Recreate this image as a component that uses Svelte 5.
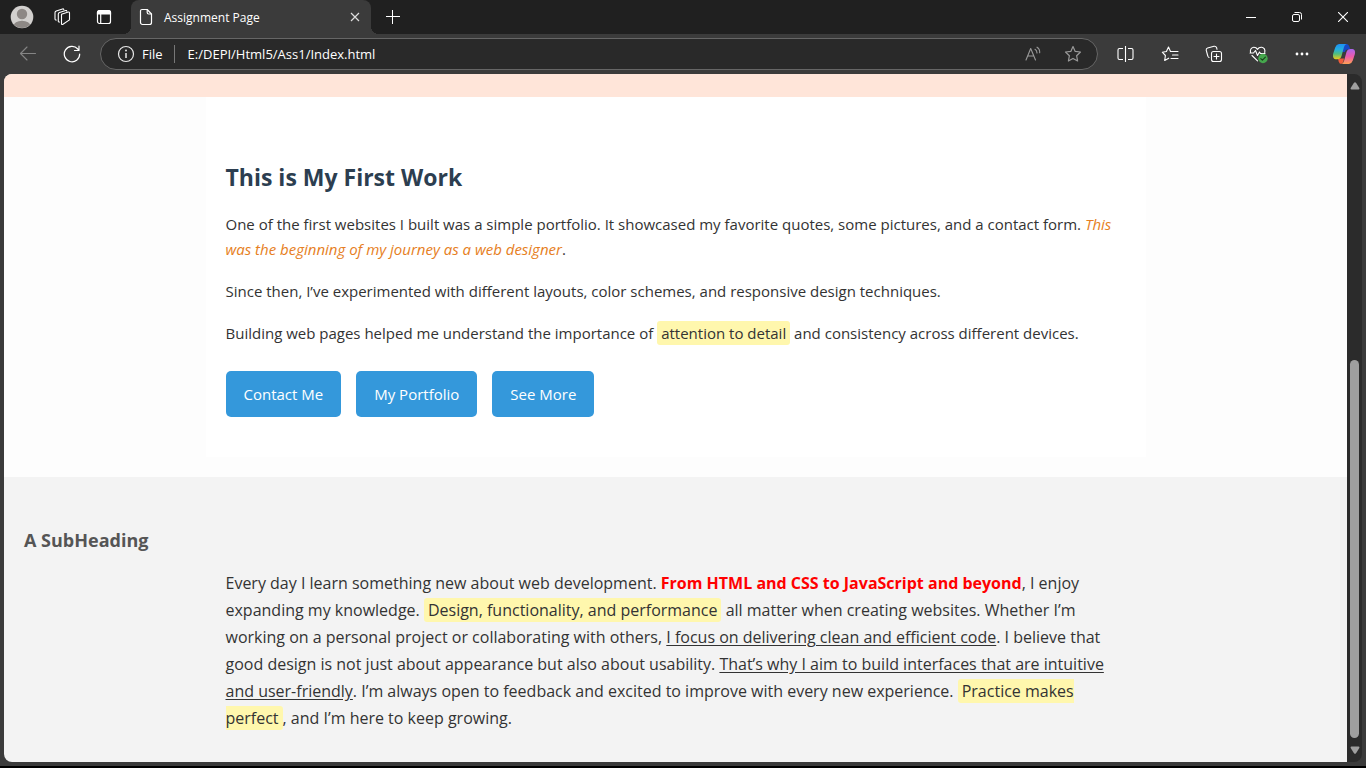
<script>
  const address = 'E:/DEPI/Html5/Ass1/Index.html';
  const links = ['Contact Me', 'My Portfolio', 'See More'];
</script>

<svelte:head><title>Assignment Page</title></svelte:head>

<div class="window">
  <header class="titlebar">
    <button class="profile" aria-label="Profile">
      <svg width="24" height="24" viewBox="0 0 24 24">
        <defs><clipPath id="avatar"><circle cx="12" cy="12" r="11" /></clipPath></defs>
        <circle cx="12" cy="12" r="11.3" fill="#d2d0ce" />
        <g clip-path="url(#avatar)" fill="#8d8885"><circle cx="12" cy="9" r="5.2" /><ellipse cx="12" cy="21" rx="8.5" ry="5.2" /></g>
      </svg>
    </button>
    <button class="spaces" aria-label="Workspaces">
      <svg width="18" height="18" viewBox="0 0 18 18" fill="none" stroke="#fff" stroke-width="1.1" stroke-linejoin="round" stroke-linecap="round">
        <path d="M8.5 6.2 15.3 4Q16.5 3.8 16.5 5V11.2Q16.5 12 15.7 12.4L10 16.3Q8.5 17 8.500 15.500Z" />
        <path d="M13.800 3.200Q13.700 2.200 12.600 2.500L6.500 4.500Q5.300 4.900 5.300 6V13.200Q5.400 14.200 6.500 14" />
        <path d="M10.800 1.600Q10.500.700 9.500 1L3.300 3Q2 3.500 2 4.700V11Q2.200 12.200 3.300 12" />
      </svg>
    </button>
    <button class="tabs" aria-label="Tab actions">
      <svg width="16" height="16" viewBox="0 0 16 16" fill="none" stroke="#fff" stroke-width="1.200">
        <rect x="1.500" y="1.500" width="13" height="13" rx="2" /><path d="M4.700 5v9" /><path d="M1.500 5V3.500a2 2 0 0 1 2-2h9a2 2 0 0 1 2 2V5z" fill="#fff" />
      </svg>
    </button>
    <div class="tab">
      <svg width="14" height="18" viewBox="0 0 14 18" fill="none" stroke="#fff" stroke-width="1.200" stroke-linejoin="round">
        <path d="M3 1.500H8.200L12.500 6V14.500a2 2 0 0 1-2 2H3.500a2 2 0 0 1-2-2V3a1.500 1.500 0 0 1 1.500-1.500Z" /><path d="M8.200 1.500V4.500A1.500 1.500 0 0 0 9.700 6h2.800" />
      </svg>
      <span>Assignment Page</span>
      <button class="close-tab" aria-label="Close tab">
        <svg width="10" height="10" viewBox="0 0 10 10" stroke="#ddd" stroke-width="1.200"><path d="M1 1l8 8M9 1 1 9" /></svg>
      </button>
    </div>
    <button class="new-tab" aria-label="New tab">
      <svg width="14" height="14" viewBox="0 0 14 14" stroke="#fff" stroke-width="1"><path d="M6.500 0v14M0 6.500h14" /></svg>
    </button>
    <div class="controls">
      <button aria-label="Minimize"><svg width="10" height="10" viewBox="0 0 10 10" stroke="#fff"><path d="M0 5.500h10" /></svg></button>
      <button aria-label="Restore"><svg width="10" height="10" viewBox="0 0 10 10" fill="none" stroke="#fff"><rect x=".5" y="2.500" width="7" height="7" rx="1.500" /><path d="M2.500.500H7.500a2 2 0 0 1 2 2V7.500" /></svg></button>
      <button aria-label="Close"><svg width="10" height="10" viewBox="0 0 10 10" stroke="#fff" stroke-width="1.100"><path d="M0 0l10 10M10 0 0 10" /></svg></button>
    </div>
  </header>

  <nav class="toolbar">
    <button aria-label="Back" disabled>
      <svg width="18" height="16" viewBox="0 0 18 16" fill="none" stroke="#858585" stroke-width="1.100" stroke-linecap="round" stroke-linejoin="round"><path d="M16.500 7.500H1.500M8 1 1.500 7.500 8 14" /></svg>
    </button>
    <button aria-label="Refresh">
      <svg width="18" height="18" viewBox="0 0 18 18" fill="none" stroke="#fff" stroke-width="1.200" stroke-linecap="round" stroke-linejoin="round"><path d="M16.700 9A7.700 7.700 0 1 1 14.800 4L16 5.300M16 1v4.500h-4.500" /></svg>
    </button>
    <div class="address">
      <button class="site" aria-label="View site information">
        <svg width="18" height="18" viewBox="0 0 18 18" fill="none" stroke="#e8e8e8" stroke-width="1.200"><circle cx="9" cy="9" r="7.500" /><path d="M9 8v5" stroke-width="1.500" /><circle cx="9" cy="5.600" r=".4" /></svg>
        <span>File</span>
      </button>
      <input type="text" value={address} aria-label="Address" spellcheck="false" />
      <button class="in-bar" aria-label="Read aloud">
        <svg width="18" height="18" viewBox="0 0 18 18" fill="none" stroke="#999" stroke-width="1.100" stroke-linecap="round" stroke-linejoin="round"><path d="M2 15 6.700 3.500 11.500 15M3.700 11h6.200M11 4.300q2 1.200 2 3.700M13 2.200q3 1.800 2.700 5.500" /></svg>
      </button>
      <button class="in-bar" aria-label="Add to favorites">
        <svg width="18" height="18" viewBox="0 0 18 18" fill="none" stroke="#999" stroke-width="1.200" stroke-linejoin="round"><path d="M9 1.500 11.200 6.400 16.500 7 12.600 10.700 13.600 16 9 13.400 4.400 16 5.400 10.700 1.500 7 6.800 6.400Z" /></svg>
      </button>
    </div>
    <div class="tools">
      <button aria-label="Split screen">
        <svg width="18" height="18" viewBox="0 0 18 18" fill="none" stroke="#fff" stroke-width="1.100"><path d="M8.500 1v16M6 3.500H2.500A1.500 1.500 0 0 0 1 5v8a1.500 1.500 0 0 0 1.500 1.500H6M11 3.500h3.500A1.500 1.500 0 0 1 16 5v8a1.500 1.500 0 0 1-1.500 1.500H11" /></svg>
      </button>
      <button aria-label="Favorites">
        <svg width="18" height="18" viewBox="0 0 18 18" fill="none" stroke="#fff" stroke-width="1.100" stroke-linejoin="round" stroke-linecap="round"><path d="M11 6.500H9.500L7.500 2 5.400 6.500 1.300 7.200 4.400 10.500 3.700 15.500 7.700 13.200M11 6.500h6M11.500 10h5.500M10 13.500h7" /></svg>
      </button>
      <button aria-label="Collections">
        <svg width="18" height="18" viewBox="0 0 18 18" fill="none" stroke="#fff" stroke-width="1.100" stroke-linecap="round"><rect x="6.500" y="6.500" width="10" height="10" rx="2" /><path d="M11.500 9v5M9 11.500h5M4 12.500Q3 12 2.800 11L1.200 5.200Q1 3.500 2.600 3L9 1.300Q11 1 11.600 2.700L12 4.300" /></svg>
      </button>
      <button aria-label="Browser essentials">
        <svg width="20" height="20" viewBox="0 0 20 20" fill="none" stroke="#fff" stroke-width="1.100" stroke-linecap="round" stroke-linejoin="round"><path d="M2.500 8.500Q1.700 4 5.700 3.300 8.200 3.200 9.500 5.400 11 3 13.700 3.300 17.500 4 16.800 8.500M2 9h3.500L7.500 6.500 9.500 11.500 11.500 8 12.500 9.500h4.500M4 11.500 9.500 16.800" /><circle cx="15" cy="14.500" r="4.700" fill="#45a74d" stroke="none" /><path d="m12.800 14.700 1.600 1.500 3-3" stroke="#183f1b" /></svg>
      </button>
      <button aria-label="Settings and more">
        <svg width="14" height="4" viewBox="0 0 14 4" fill="#fff"><circle cx="2" cy="2" r="1.400" /><circle cx="7" cy="2" r="1.400" /><circle cx="12" cy="2" r="1.400" /></svg>
      </button>
      <button class="copilot" aria-label="Copilot">
        <svg width="24" height="22" viewBox="0 0 24 22">
          <defs>
            <linearGradient id="cool" x1="0" y1="0" x2="0" y2="1"><stop offset="0" stop-color="#1d90f5" /><stop offset=".35" stop-color="#25aee0" /><stop offset=".65" stop-color="#52bd7c" /><stop offset="1" stop-color="#f2cb18" /></linearGradient>
            <linearGradient id="warm" x1="0" y1="0" x2="0" y2="1"><stop offset="0" stop-color="#a966ed" /><stop offset=".5" stop-color="#eb5aab" /><stop offset="1" stop-color="#ffa052" /></linearGradient>
          </defs>
          <path d="M11 1H15Q16.800 1.300 17.500 4L18.200 6.500H15Q13.500 6.500 12.700 9L10 9Z" fill="#1748c5" />
          <path d="M6 15.500H12L11.500 18Q10.800 21 9 21 7.200 20.800 6.600 18.300Z" fill="#ef5c3b" />
          <path d="M7 1h7.500Q12.700 1.500 12 4L9.500 13Q8.500 16.300 5.500 16.300H3.500Q.300 15.500 1.100 11L3.200 4.500Q4.300 1.300 7 1Z" fill="url(#cool)" />
          <path d="M17 21H9.500Q11.300 20.500 12 18L14.500 9Q15.500 6 18.500 6H20.500Q23.700 6.500 22.900 11L20.800 17.500Q19.700 20.700 17 21Z" fill="url(#warm)" />
        </svg>
      </button>
    </div>
  </nav>

  <div class="viewport">
    <main>
      <div class="banner"></div>
      <section class="work">
        <article>
          <h2>This is My First Work</h2>
          <p>One of the first websites I built was a simple portfolio. It showcased my favorite quotes, some pictures, and a contact form. <em>This<br />was the beginning of my journey as a web designer</em>.</p>
          <p>Since then, I’ve experimented with different layouts, color schemes, and responsive design techniques.</p>
          <p>Building web pages helped me understand the importance of <mark>attention to detail</mark> and consistency across different devices.</p>
          <div class="links">
            {#each links as label}<a href="#top">{label}</a>{/each}
          </div>
        </article>
      </section>
      <section class="about">
        <h3>A SubHeading</h3>
        <p>Every day I learn something new about web development. <strong>From HTML and CSS to JavaScript and beyond</strong>, I enjoy<br />expanding my knowledge. <mark>Design, functionality, and performance</mark> all matter when creating websites. Whether I’m<br />working on a personal project or collaborating with others, <u>I focus on delivering clean and efficient code</u>. I believe that<br />good design is not just about appearance but also about usability. <u>That’s why I aim to build interfaces that are intuitive<br />and user-friendly</u>. I’m always open to feedback and excited to improve with every new experience. <mark>Practice makes<br />perfect</mark>, and I’m here to keep growing.</p>
      </section>
    </main>
    <div class="scrollbar" aria-hidden="true">
      <svg width="10" height="8" viewBox="0 0 10 8" fill="#9f9f9f"><path d="M4 .8Q5-.3 6 .8L9.300 6Q9.800 7.500 8.500 7.500H1.500Q.200 7.500.700 6Z" /></svg>
      <div class="track"><div class="thumb"></div></div>
      <svg width="10" height="8" viewBox="0 0 10 8" fill="#9f9f9f"><path d="M4 7.200Q5 8.300 6 7.200L9.300 2Q9.800.500 8.500.500H1.500Q.200.500.700 2Z" /></svg>
    </div>
  </div>
</div>

<style>
  :global(body) { margin: 0; background: #000; }
  .window {
    box-sizing: border-box;
    height: 100vh;
    display: flex;
    flex-direction: column;
    background: #3b3b3b;
    border-bottom: 2px solid #000;
    font-family: "Segoe UI", "Open Sans", "Noto Sans", sans-serif;
    overflow: hidden;
  }
  button {
    display: flex;
    align-items: center;
    justify-content: center;
    padding: 0;
    border: 0;
    background: none;
    color: inherit;
    font: inherit;
  }
  svg { display: block; flex: none; }
  .titlebar { display: flex; height: 34px; flex: none; background: #202020; color: #fff; }
  .profile { width: 44px; }
  .spaces { width: 36px; }
  .tabs { width: 48px; }
  .tab {
    position: relative;
    box-sizing: border-box;
    display: flex;
    align-items: center;
    gap: 11px;
    width: 240px;
    margin-left: 3px;
    padding: 0 8px;
    border-radius: 8px 8px 0 0;
    background: #3b3b3b;
    font-size: 12px;
  }
  .tab::before, .tab::after { content: ""; position: absolute; bottom: 0; width: 8px; height: 8px; }
  .tab::before { right: 100%; background: radial-gradient(circle at 0 0, #202020 8px, #3b3b3b 8px); }
  .tab::after { left: 100%; background: radial-gradient(circle at 100% 0, #202020 8px, #3b3b3b 8px); }
  .close-tab { width: 16px; height: 20px; margin-left: auto; }
  .new-tab { width: 44px; }
  .controls { display: flex; margin-left: auto; }
  .controls button { width: 46px; }
  .toolbar { display: flex; align-items: center; height: 40px; flex: none; padding-left: 6px; color: #fff; }
  .toolbar > button { width: 44px; height: 32px; }
  .address {
    box-sizing: border-box;
    display: flex;
    align-items: center;
    flex: 1;
    height: 32px;
    margin: 0 6px;
    padding: 0 4px 0 16px;
    border: 1px solid #666;
    border-radius: 16px;
    background: #292929;
    font-size: 13px;
  }
  .site { gap: 7px; padding-right: 11px; border-right: 1px solid #777; }
  .address input { flex: 1; min-width: 0; padding: 0 13px; border: 0; outline: 0; background: none; color: #fff; font: inherit; }
  .in-bar { width: 40px; height: 28px; }
  .tools { display: flex; padding-right: 2px; }
  .tools button { width: 44px; height: 32px; }
  .tools .copilot { width: 40px; }
  .viewport { display: flex; flex: 1; min-height: 0; margin: 0 4px 4px; border-radius: 8px; overflow: hidden; background: #2b2b2b; }
  main { flex: 1; min-width: 0; display: flex; flex-direction: column; background: #f3f3f3; color: #333; font-size: 15px; }
  .banner { height: 23px; flex: none; background: #ffe5d9; }
  .work { padding-bottom: 20px; background: #fdfdfd; }
  article { max-width: 900px; margin: 0 auto; padding: 61px 20px 40px; background: #fff; }
  h2 { margin: 0 0 16px; color: #2c3e50; font-size: 23px; line-height: 38px; }
  article p { margin: 0 0 17px; line-height: 25px; }
  p { white-space: nowrap; }
  em { color: #e67e22; }
  mark { padding: 2px 4px; border-radius: 3px; background: #fff7ad; color: inherit; }
  .links { display: flex; gap: 15px; padding-top: 8px; }
  .links a { padding: 10px 18px; border-radius: 5px; background: #3498db; color: #fff; line-height: 26px; text-decoration: none; }
  .about { flex: 1; padding: 48px 20px 0; }
  h3 { margin: 0 0 15px; color: #555; font-size: 18px; line-height: 30px; }
  .about p { max-width: 900px; margin: 0 auto; font-size: 16px; line-height: 27px; }
  .about mark { padding-top: 1px; padding-bottom: 1px; }
  strong { color: #f00; }
  u { text-underline-offset: 2px; }
  .scrollbar { display: flex; flex-direction: column; align-items: center; gap: 8px; width: 15px; padding: 8px 0; box-sizing: border-box; }
  .track { display: flex; align-items: flex-end; flex: 1; }
  .thumb { width: 9px; height: 59%; border-radius: 5px; background: #9f9f9f; }
</style>
